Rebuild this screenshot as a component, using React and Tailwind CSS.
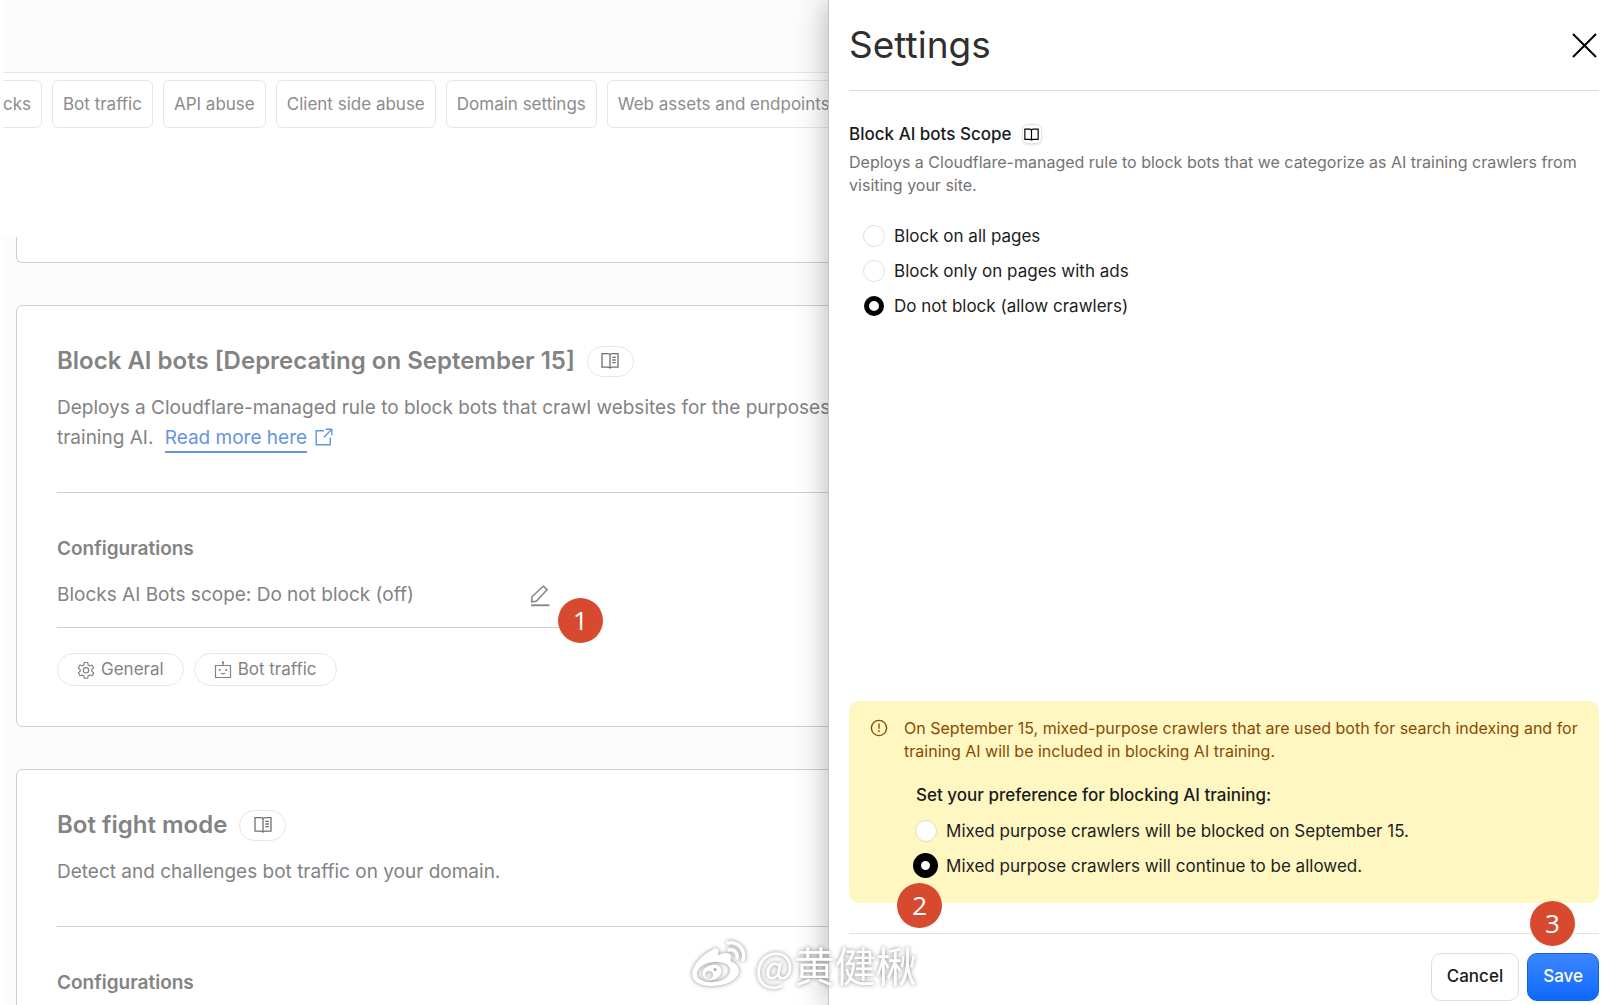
import React from "react";

const tabs = ["Bot traffic", "API abuse", "Client side abuse", "Domain settings", "Web assets and endpoints"];

function BookIcon() {
  return (
    <svg width="18" height="18" viewBox="0 0 18 18" fill="none" stroke="currentColor" strokeWidth="1.3" aria-hidden="true">
      <path d="M1 1.700h5.600c1.300 0 2.400.6 2.400 1.300 0-.7 1.100-1.300 2.400-1.300H17v13.500H11.200c-1.200 0-2.200.4-2.200 1 0-.6-1-1-2.200-1H1z" />
      <path d="M9 3v13.500M11.300 5.300h3.500M11.300 8h3.500M11.300 10.700h3.500" />
    </svg>
  );
}

function SmallBookIcon() {
  return (
    <svg width="15" height="15" viewBox="0 0 14 14" fill="none" stroke="currentColor" strokeWidth="1.100" aria-hidden="true">
      <path d="M.8 2h4.700C6.300 2 7 2.500 7 3.200 7 2.500 7.700 2 8.500 2h4.700v9.500H8.300c-.8 0-1.300.3-1.300 1 0-.7-.5-1-1.300-1H.8zM7 3v9.500" />
    </svg>
  );
}

function ExternalIcon() {
  return (
    <svg className="mb-1" width="18" height="18" viewBox="0 0 18 18" fill="none" stroke="currentColor" strokeWidth="1.400" aria-hidden="true">
      <path d="M9 2.700H1.200v14.100h14.100V9.500M10.800 1.200h6v6M16.800 1.200L8.800 9.200" />
    </svg>
  );
}

function PencilIcon() {
  return (
    <svg width="22" height="22" viewBox="0 0 22 22" fill="none" stroke="currentColor" strokeWidth="1.500" aria-hidden="true">
      <path d="M14.200 1.200l4 3.300L7.600 15.900l-5 1 .4-5.200z" strokeLinejoin="round" />
      <path d="M2 20.300h18.500" strokeWidth="1.800" />
    </svg>
  );
}

function GearIcon() {
  return (
    <svg width="18" height="18" viewBox="0 0 24 24" fill="none" stroke="currentColor" strokeWidth="1.600" strokeLinejoin="round" aria-hidden="true">
      <path d="M9.800 2h4.400l.7 3.200 2 1.200 3.100-1 2.200 3.800-2.400 2.200v2.200l2.400 2.200-2.200 3.800-3.100-1-2 1.200-.7 3.200H9.800l-.7-3.200-2-1.200-3.100 1-2.200-3.800 2.400-2.200v-2.200L1.800 9.200 4 5.400l3.100 1 2-1.200z" />
      <circle cx="12" cy="12.400" r="3.600" />
    </svg>
  );
}

function RobotIcon() {
  return (
    <svg width="18" height="18" viewBox="0 0 18 18" fill="none" stroke="currentColor" strokeWidth="1.200" aria-hidden="true">
      <path d="M1.500 4.500h15v12h-15zM9 4.500V1.500M7 12.300q2 1 4 0" />
      <g fill="currentColor" stroke="none">
        <circle cx="5.800" cy="9" r="1.100" />
        <circle cx="12.200" cy="9" r="1.100" />
        <circle cx="9" cy="1.500" r="1.200" />
      </g>
    </svg>
  );
}

function DocsPill({ label }) {
  return (
    <a href="#docs" aria-label={label} className="flex h-[31px] w-[47px] items-center justify-center rounded-full border border-[#e6e6e6] text-[#707070]">
      <BookIcon />
    </a>
  );
}

function Marker({ children, className }) {
  return (
    <span className={`absolute z-30 flex size-[45px] items-center justify-center rounded-full bg-[#d84a2f] font-['Open_Sans',sans-serif] text-[26px] text-white ${className}`}>
      {children}
    </span>
  );
}

function Tag({ icon, children }) {
  return (
    <span className="flex h-[33px] items-center gap-1.5 rounded-full border border-[#e6e6e6] px-[19px] text-[17px]">
      {icon}
      {children}
    </span>
  );
}

function Radio({ name, label, defaultChecked, tone }) {
  return (
    <label className="flex h-[35px] items-center gap-2 text-[17px] text-[#1d1d1d]">
      <span className="flex size-[25px] shrink-0 items-center justify-center">
        <input type="radio" name={name} defaultChecked={defaultChecked} className={`size-[22px] shrink-0 appearance-none rounded-full border bg-white checked:border-black ${tone}`} />
      </span>
      <span className="pt-0.5">{label}</span>
    </label>
  );
}

function Watermark() {
  return (
    <div className="pointer-events-none absolute bottom-[13px] left-[690px] z-40 flex items-center gap-2 text-white drop-shadow-[0_0_2px_rgba(0,0,0,0.45)]">
      <svg width="57" height="48" viewBox="0 0 57 48" aria-hidden="true">
        <path fillRule="evenodd" fill="currentColor" d="M22 10c5-4 8-1 6 5 7-3 14-3 13 3-.3 2-1 3 1 4 11 5 8 15-2 20-12 6-32 6-37-4C-1 29 11 15 22 10zM23 22C13 23 6 29 7 35c1 5 8 8 17 7 10-1 17-7 16-13-1-5-8-8-17-7z" />
        <path fillRule="evenodd" fill="currentColor" d="M22 25c-7 1-11 6-9 11 2 4 8 5 13 3 5-3 7-8 4-12-2-2-5-3-8-2zM19 31a4 4 0 1 0 .1 0zM25 28a1.500 1.500 0 1 0 .1 0z" />
        <path fill="none" stroke="currentColor" strokeWidth="3.500" strokeLinecap="round" d="M38 3c10-2 18 7 15 17M39 10c5-1 9 3 8 8" />
      </svg>
      <span className="font-['Noto_Sans_CJK_SC',sans-serif] text-[41px] leading-[56px]">@黄健楸</span>
    </div>
  );
}

export default function App() {
  return (
    <div className="relative h-screen overflow-hidden bg-white pl-[3px] font-['Inter',sans-serif] text-[#838383]">
      <main className="h-full overflow-hidden bg-[#fcfcfc]">
        <div className="h-[73px] border-b border-[#e6e6e6]" />
        <nav className="flex h-[164px] items-start gap-2.5 overflow-hidden bg-white pt-[7px] text-[17px] whitespace-nowrap text-[#8c8c8c]">
          <div className="flex w-[39px] shrink-0 justify-end">
            <button className="h-12 rounded-md border border-[#e6e6e6] px-2.5 pt-0.5">Attacks</button>
          </div>
          {tabs.map((t) => (
            <button key={t} className="h-12 shrink-0 rounded-md border border-[#e6e6e6] px-2.5 pt-0.5">{t}</button>
          ))}
        </nav>

        <div className="ml-[13px] flex flex-col gap-[42px]">
          <section className="h-[26px] rounded-b-md border border-t-0 border-[#cfcfcf] bg-white" />

          <section className="rounded-md border border-[#cfcfcf] bg-white px-10 pt-[39px] pb-10">
            <div className="flex items-center gap-3">
              <h2 className="text-[24px] leading-[32px] font-semibold">Block AI bots [Deprecating on September 15]</h2>
              <DocsPill label="Block AI bots documentation" />
            </div>
            <p className="mt-4 text-[19px] leading-[30px]">
              Deploys a Cloudflare-managed rule to block bots that crawl websites for the purposes of
              <br />
              training AI.{" "}
              <a href="#more" className="ml-1.5 inline-flex items-center gap-2 text-[#6495e2]">
                <span className="border-b-2 border-[#6495e2] leading-[26px]">Read more here</span>
                <ExternalIcon />
              </a>
            </p>
            <div className="mt-[39px] border-t border-[#cfcfcf] pt-[41px]">
              <h3 className="text-[19px] leading-[30px] font-semibold">Configurations</h3>
              <div className="relative flex h-16 w-[508px] items-center justify-between border-b border-[#cfcfcf] pr-3.5 text-[19px]">
                <span>Blocks AI Bots scope: Do not block (off)</span>
                <button aria-label="Edit scope"><PencilIcon /></button>
                <Marker className="-right-[38px] -bottom-4">1</Marker>
              </div>
              <div className="mt-[25px] flex gap-2.5">
                <Tag icon={<GearIcon />}>General</Tag>
                <Tag icon={<RobotIcon />}>Bot traffic</Tag>
              </div>
            </div>
          </section>

          <section className="rounded-md border border-[#cfcfcf] bg-white px-10 pt-[39px] pb-10">
            <div className="flex items-center gap-3">
              <h2 className="text-[24px] leading-[32px] font-semibold">Bot fight mode</h2>
              <DocsPill label="Bot fight mode documentation" />
            </div>
            <p className="mt-4 text-[19px] leading-[30px]">Detect and challenges bot traffic on your domain.</p>
            <div className="mt-[39px] border-t border-[#cfcfcf] pt-[41px]">
              <h3 className="text-[19px] leading-[30px] font-semibold">Configurations</h3>
            </div>
          </section>
        </div>
      </main>

      <aside className="absolute inset-y-0 right-0 z-20 flex w-[48.6%] flex-col border-l border-[#c8c8c8] bg-white pr-3 pl-5 shadow-[0_0_30px_rgba(0,0,0,0.3)]">
        <header className="flex h-[91px] shrink-0 items-center justify-between border-b border-[#dadada]">
          <h1 className="text-[37px] leading-[50px] text-[#2f2f2f]">Settings</h1>
          <button aria-label="Close" className="text-black">
            <svg width="30" height="30" viewBox="0 0 30 30" fill="none" stroke="currentColor" strokeWidth="2" aria-hidden="true">
              <path d="M4 4l23 23M27 4L4 27" />
            </svg>
          </button>
        </header>

        <div className="pt-[31px]">
          <div className="flex items-center gap-2.5">
            <h2 className="text-[17px] leading-6 font-medium text-[#1b1b1b]">Block AI bots Scope</h2>
            <a href="#scope" aria-label="Scope documentation" className="flex size-5 items-center justify-center rounded-md border border-[#e2e2e2] text-black shadow-sm">
              <SmallBookIcon />
            </a>
          </div>
          <p className="mt-[5px] text-[16px] leading-[23px] text-[#737373]">
            Deploys a Cloudflare-managed rule to block bots that we categorize as AI training crawlers from visiting your site.
          </p>
          <fieldset className="mt-[21px] ml-3">
            <Radio name="scope" label="Block on all pages" tone="border-[#e2e2e2] checked:border-[5px]" />
            <Radio name="scope" label="Block only on pages with ads" tone="border-[#e2e2e2] checked:border-[5px]" />
            <Radio name="scope" label="Do not block (allow crawlers)" defaultChecked tone="border-[#e2e2e2] checked:size-5 checked:border-[5px]" />
          </fieldset>
        </div>

        <section className="relative mt-auto flex gap-4 rounded-[10px] bg-[#fef7c2] py-4 pr-5 pb-5 pl-[21px] text-[#894b00]">
          <svg className="mt-[2px] shrink-0" width="18" height="18" viewBox="0 0 18 18" fill="none" stroke="currentColor" strokeWidth="1.400" aria-hidden="true">
            <circle cx="9" cy="9" r="7.600" />
            <path d="M9 4.500v5.200M9 11.300v1.700" />
          </svg>
          <div>
            <p className="text-[16px] leading-[23px]">
              On September 15, mixed-purpose crawlers that are used both for search indexing and for training AI will be included in blocking AI training.
            </p>
            <fieldset className="mt-[15px] ml-[9px]">
              <legend className="pl-[3px] text-[17px] leading-[35px] font-medium text-[#1b1b1b]">Set your preference for blocking AI training:</legend>
              <Radio name="mixed" label="Mixed purpose crawlers will be blocked on September 15." tone="border-[#e6dfae] checked:border-[8px]" />
              <Radio name="mixed" label="Mixed purpose crawlers will continue to be allowed." defaultChecked tone="border-[#e6dfae] checked:size-[25px] checked:border-[8px]" />
            </fieldset>
          </div>
          <Marker className="-bottom-[25px] left-12">2</Marker>
        </section>

        <footer className="relative mt-[30px] flex shrink-0 justify-end gap-2 border-t border-[#e2e2e2] pt-[19px] pb-1">
          <button className="h-12 rounded-[10px] border border-[#dedede] bg-white px-[15px] text-[17px] font-medium text-[#1b1b1b]">Cancel</button>
          <button className="h-12 rounded-[10px] border border-[#0f62e6] bg-linear-to-b from-[#3b86ff] to-[#0b69ff] px-[15px] text-[17px] font-medium text-white">Save</button>
          <Marker className="-top-[33px] right-6">3</Marker>
        </footer>
      </aside>

      <Watermark />
    </div>
  );
}
